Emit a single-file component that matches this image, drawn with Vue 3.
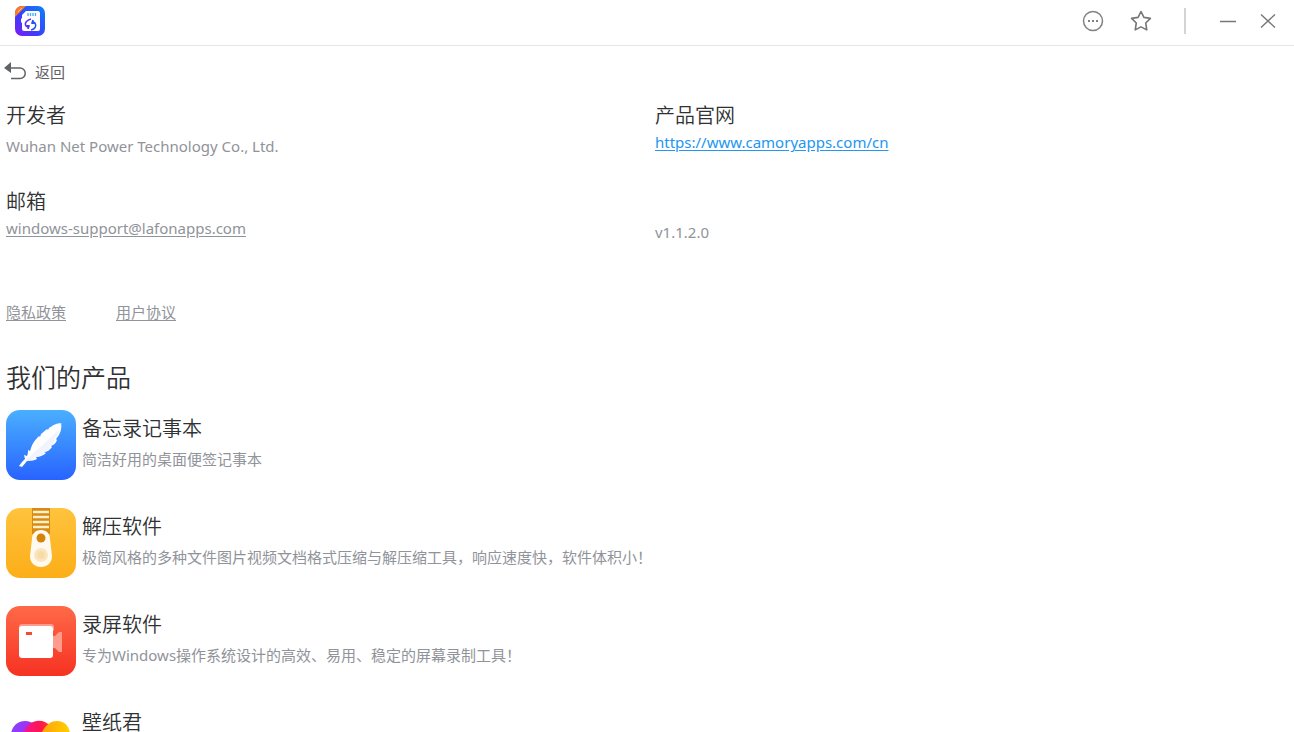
<script setup>
import { ref } from 'vue'

const starred = ref(false)

const products = [
	{ id: 'memo', name: '备忘录记事本', desc: '简洁好用的桌面便签记事本' },
	{ id: 'unzip', name: '解压软件', desc: '极简风格的多种文件图片视频文档格式压缩与解压缩工具，响应速度快，软件体积小！' },
	{ id: 'recorder', name: '录屏软件', desc: '专为Windows操作系统设计的高效、易用、稳定的屏幕录制工具！' },
	{ id: 'wallpaper', name: '壁纸君', desc: '' }
]
</script>

<template>
	<div class="about-page">
		<header class="title-bar">
			<svg class="app-logo" viewBox="0 0 32 32" aria-hidden="true">
				<defs>
					<linearGradient id="logo-bg" x1="0" y1="1" x2="1" y2="0">
						<stop offset="0" stop-color="#8a16f5" />
						<stop offset="0.4" stop-color="#3c3cfb" />
						<stop offset="1" stop-color="#0785fc" />
					</linearGradient>
					<clipPath id="logo-clip"><rect x="1" y="1" width="30" height="30" rx="7" /></clipPath>
				</defs>
				<g clip-path="url(#logo-clip)">
					<rect width="32" height="32" fill="url(#logo-bg)" />
					<path d="M1 1h11L1 12z" fill="#fb7c22" />
					<path d="M4 7l4-4" stroke="#ffc38e" stroke-width="1" />
				</g>
				<path d="M12 6h12a2 2 0 0 1 2 2v16a2 2 0 0 1-2 2H10a2 2 0 0 1-2-2v-6l-1-1v-3l1-1v-3z" fill="#fff" />
				<path d="M14 8v3M16.500 8v3M19 8v3M21.500 8v3" stroke="#42a8fa" stroke-width="1.300" />
				<path d="M17 14c-4 1-7 4-5 7 1 1 2 1 3 0l-1 3" fill="none" stroke="#5a32f4" stroke-width="1.500" />
				<path d="M17 25c4-1 6-4 4-7-1-1-2-1-3 0l1-3" fill="none" stroke="#2350f7" stroke-width="1.500" />
				<path d="M12 20h4l-2 4z" fill="#5a32f4" />
				<path d="M17 19h4l-2-4z" fill="#2350f7" />
			</svg>
			<div class="window-actions">
				<button type="button" class="icon-btn" aria-label="更多">
					<svg viewBox="0 0 24 24">
						<circle cx="12" cy="12" r="9.500" fill="none" stroke="#828282" stroke-width="1.500" />
						<path d="M7 11h2v2H7zM11 11h2v2h-2zM15 11h2v2h-2z" fill="#828282" />
					</svg>
				</button>
				<button type="button" class="icon-btn" aria-label="收藏" :aria-pressed="starred" @click="starred = !starred">
					<svg viewBox="0 0 24 24">
						<path
							d="M12 2.500l2.900 5.900 6.500 1-4.700 4.600 1.100 6.900-5.800-3-5.800 3 1.100-6.900L2.600 9.400l6.500-1z"
							:fill="starred ? '#777' : 'none'"
							stroke="#777"
							stroke-width="1.600"
							stroke-linejoin="round"
						/>
					</svg>
				</button>
				<span class="divider"></span>
				<button type="button" class="icon-btn" aria-label="最小化">
					<svg viewBox="0 0 24 24"><path d="M4 12.500h16" stroke="#777" stroke-width="1.500" /></svg>
				</button>
				<button type="button" class="icon-btn" aria-label="关闭">
					<svg viewBox="0 0 24 24"><path d="M5 5.500l14 13M19 5.500l-14 13" stroke="#777" stroke-width="1.400" /></svg>
				</button>
			</div>
		</header>

		<button type="button" class="back">
			<svg viewBox="0 0 24 20" aria-hidden="true">
				<path d="M1 6l7-6v11z" fill="#606366" />
				<path d="M7 6h10a5 5 0 0 1 0 10.500H8" fill="none" stroke="#606366" stroke-width="1.500" />
			</svg>
			<span>返回</span>
		</button>

		<main class="content">
			<div class="info-grid">
				<section>
					<h2>开发者</h2>
					<p class="company">Wuhan Net Power Technology Co., Ltd.</p>
				</section>
				<section>
					<h2>产品官网</h2>
					<a class="site" href="https://www.camoryapps.com/cn">https://www.camoryapps.com/cn</a>
				</section>
				<section>
					<h2>邮箱</h2>
					<a href="mailto:windows-support@lafonapps.com">windows-support@lafonapps.com</a>
				</section>
				<p class="version">v1.1.2.0</p>
			</div>

			<nav class="policies">
				<a href="#privacy">隐私政策</a>
				<a href="#terms">用户协议</a>
			</nav>

			<h1>我们的产品</h1>
			<ul class="product-list">
				<li v-for="item in products" :key="item.id" class="product">
					<svg v-if="item.id === 'memo'" class="product-icon" viewBox="0 0 70 70" aria-hidden="true">
						<defs>
							<linearGradient id="memo-bg" x1="0" y1="0" x2="0" y2="1">
								<stop offset="0" stop-color="#4aafff" />
								<stop offset="1" stop-color="#2863ff" />
							</linearGradient>
						</defs>
						<rect width="70" height="70" rx="14" fill="url(#memo-bg)" />
						<path d="M56 13c-6 0-10 3-13 5l-1 2-1-1-6 5-1 3-1-1c-4 4-7 8-8 12l-1 3-2-1c0 2 0 4-1 6l-3-1 1 4-3 3-3 4 3 1 5-6c5 0 8-1 10-2l-1-2c4 0 8-2 10-4l-2-1c3 0 6-2 8-5l-1-1c3-1 5-3 6-6l-1-1c5-5 6-12 5-16z" fill="#fff" />
						<path d="M53 19C45 28 32 39 20 50c5 0 6 0 9-1l-1-2c4 0 8-2 10-4l-2-1c3 0 6-2 8-5l-1-1c3-1 5-3 6-6l-1-1c3-3 5-7 5-10z" fill="#f1f4ff" />
					</svg>

					<svg v-else-if="item.id === 'unzip'" class="product-icon" viewBox="0 0 70 70" aria-hidden="true">
						<defs>
							<linearGradient id="unzip-bg" x1="0" y1="0" x2="0" y2="1">
								<stop offset="0" stop-color="#ffc33d" />
								<stop offset="1" stop-color="#fcae18" />
							</linearGradient>
						</defs>
						<rect width="70" height="70" rx="14" fill="url(#unzip-bg)" />
						<path d="M26 0h18v26H26z" fill="#d78b12" />
						<path d="M27 4h16M27 9h16M27 14h16M27 19h16" stroke="#fff0c9" stroke-width="2.500" />
						<path d="M35 22c6 0 9 4 9 9l2 17c0 7-5 11-11 11s-11-4-11-11l2-17c0-5 3-9 9-9z" fill="#fffaf0" />
						<circle cx="35" cy="30" r="4.500" fill="#d5840b" />
						<circle cx="35" cy="47" r="7" fill="#fce5bd" />
						<circle cx="35" cy="47" r="4" fill="#f7dcab" />
					</svg>

					<svg v-else-if="item.id === 'recorder'" class="product-icon" viewBox="0 0 70 70" aria-hidden="true">
						<defs>
							<linearGradient id="recorder-bg" x1="0" y1="0" x2="0" y2="1">
								<stop offset="0" stop-color="#ff6948" />
								<stop offset="1" stop-color="#f63222" />
							</linearGradient>
						</defs>
						<rect width="70" height="70" rx="14" fill="url(#recorder-bg)" />
						<path d="M47 30h2l4-4h3v20h-3l-4-4h-2z" fill="#ff9b8c" />
						<rect x="13" y="18" width="35" height="8" rx="3" fill="#ff9b8c" />
						<rect x="13" y="20" width="34" height="32" rx="3" fill="#fff" />
						<path d="M20 26h6v3h-6z" fill="#f64b32" />
					</svg>

					<svg v-else class="product-icon" viewBox="0 0 70 70" aria-hidden="true">
						<defs>
							<linearGradient id="petal-purple" x1="0" y1="0" x2="1" y2="1">
								<stop offset="0" stop-color="#7b4bff" />
								<stop offset="0.5" stop-color="#b520f4" />
								<stop offset="1" stop-color="#8b24ff" />
							</linearGradient>
							<linearGradient id="petal-red" x1="0" y1="0" x2="1" y2="0">
								<stop offset="0" stop-color="#f0159c" />
								<stop offset="0.5" stop-color="#fd164f" />
								<stop offset="1" stop-color="#ff4a22" />
							</linearGradient>
							<linearGradient id="petal-yellow" x1="0" y1="0" x2="1" y2="0">
								<stop offset="0" stop-color="#ff9a0b" />
								<stop offset="1" stop-color="#ffd000" />
							</linearGradient>
						</defs>
						<path d="M35 62C20 54 5 42 5 31a14 14 0 0 1 28 0z" fill="url(#petal-purple)" />
						<path d="M35 62C20 54 14 39 18 28c4-11 14-13 21-10 8 4 12 12 12 22z" fill="url(#petal-red)" />
						<path d="M35 62C28 49 30 37 36 28c4-8 10-11 15-11 8 0 13 6 13 14 0 11-14 23-29 31z" fill="url(#petal-yellow)" />
					</svg>

					<div class="product-text">
						<h3>{{ item.name }}</h3>
						<p v-if="item.desc">{{ item.desc }}</p>
					</div>
				</li>
			</ul>
		</main>
	</div>
</template>

<style>
body {
	margin: 0;
	background: #fff;
}
</style>

<style scoped>
.about-page {
	height: 100vh;
	overflow: hidden;
	font-family: 'Noto Sans', 'Noto Sans CJK SC', sans-serif;
	font-size: 15px;
	line-height: 24px;
	color: #909399;
}

h1,
h2,
h3,
p,
ul {
	margin: 0;
	padding: 0;
	font-weight: 400;
}

h1,
h2,
h3 {
	font-weight: 350;
	color: #303133;
}

h2,
h3 {
	font-size: 20px;
	line-height: 28px;
}

a {
	color: #909399;
	text-decoration: underline;
	text-underline-offset: 2px;
}

button {
	border: 0;
	padding: 0;
	background: none;
	font: inherit;
	cursor: pointer;
}

.title-bar {
	display: flex;
	align-items: center;
	justify-content: space-between;
	padding: 5px 14px 8px;
	border-bottom: 1px solid #e4e4e4;
}

.app-logo {
	width: 32px;
	height: 32px;
}

.window-actions {
	display: flex;
	align-items: center;
}

.icon-btn {
	display: flex;
	width: 24px;
	height: 24px;
}

.icon-btn + .icon-btn {
	margin-left: 16px;
}

.icon-btn[aria-label='收藏'] {
	margin-left: 24px;
}

.icon-btn svg {
	width: 24px;
	height: 24px;
}

.divider {
	width: 2px;
	height: 26px;
	margin: 0 30px 0 31px;
	background: #d4d4d4;
}

.back {
	display: flex;
	align-items: center;
	gap: 8px;
	margin: 14px 0 0 3px;
	color: #606266;
}

.back svg {
	width: 24px;
	height: 20px;
}

.content {
	padding: 18px 0 0 6px;
}

.info-grid {
	display: grid;
	grid-template-columns: 1fr 1fr;
	grid-auto-rows: 86px;
	column-gap: 10px;
}

.company {
	margin-top: 4px;
}

.site {
	color: #2196f3;
}

.version {
	padding-top: 32px;
}

.policies {
	display: flex;
	gap: 50px;
	margin-top: 26px;
}

h1 {
	margin-top: 35px;
	font-size: 25px;
	line-height: 36px;
}

.product-list {
	display: flex;
	flex-direction: column;
	gap: 28px;
	margin-top: 15px;
	list-style: none;
}

.product {
	display: flex;
	gap: 6px;
}

.product-icon {
	flex: none;
	width: 70px;
	height: 70px;
}

.product-text {
	display: flex;
	flex-direction: column;
	gap: 4px;
	padding-top: 5px;
}
</style>
